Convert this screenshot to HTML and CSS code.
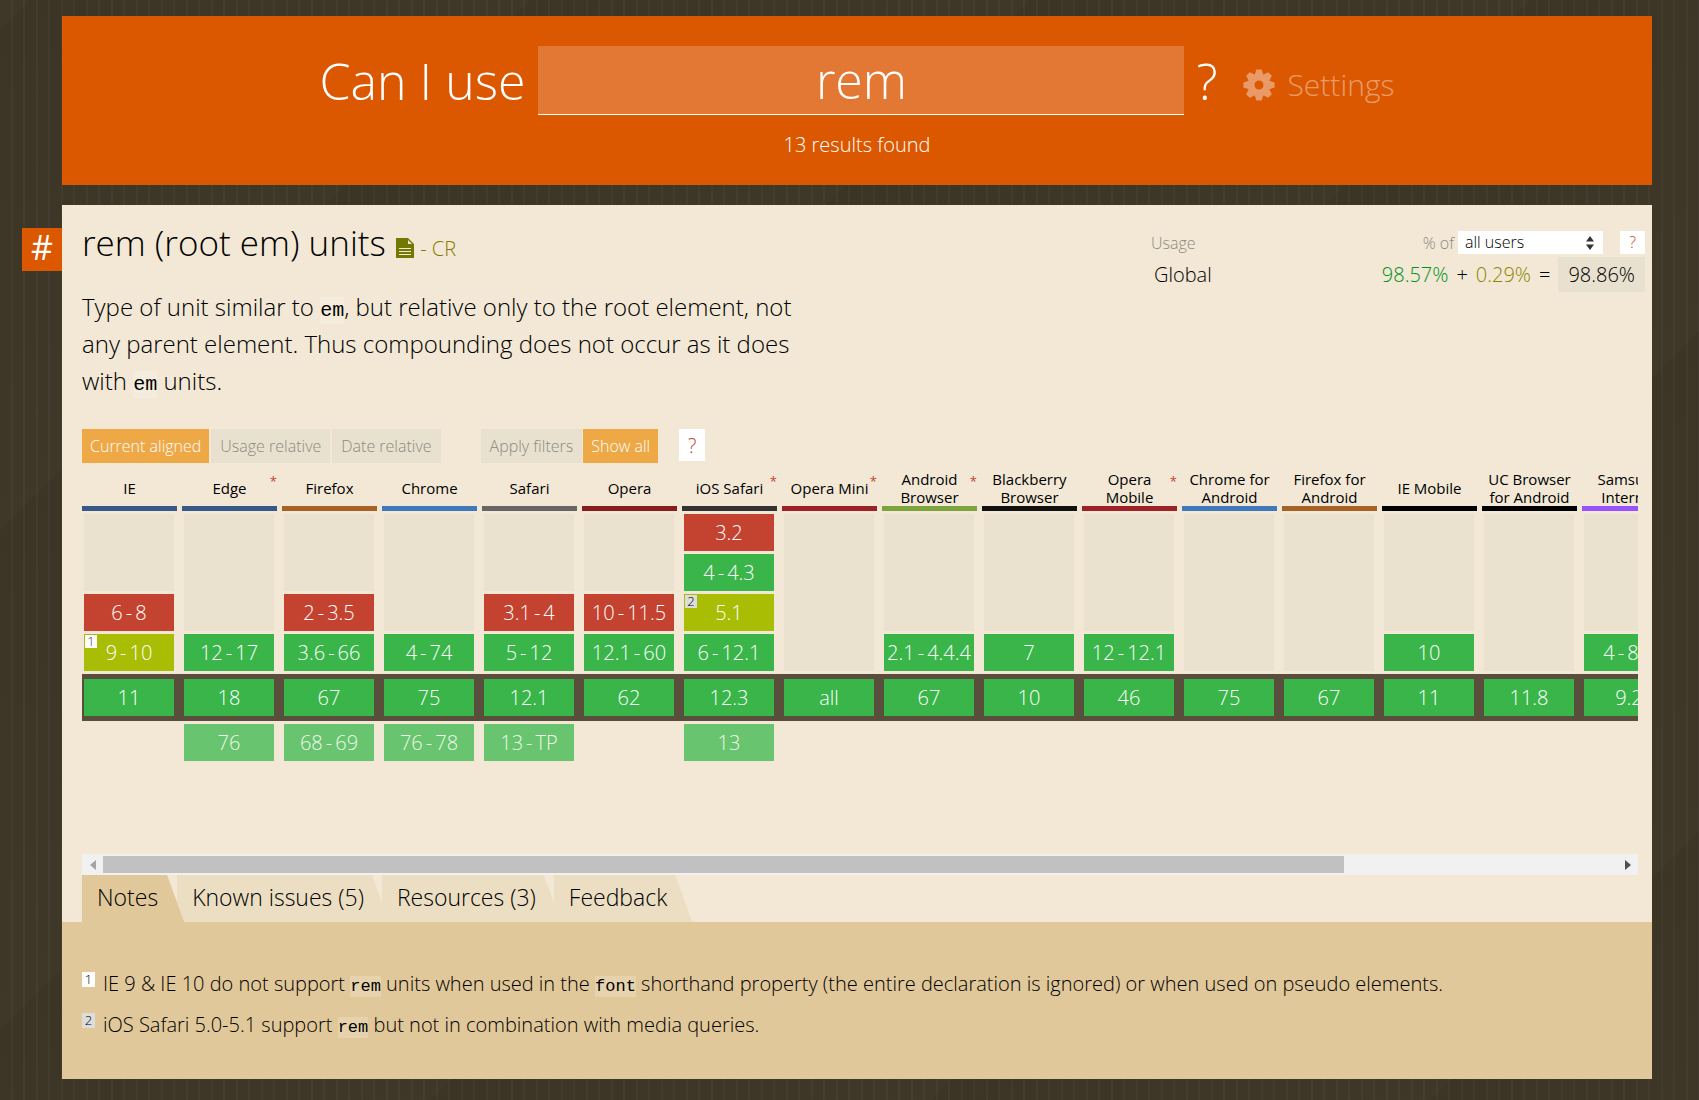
FILE: index.html
```html
<!DOCTYPE html>
<html lang="en">
<head>
<meta charset="utf-8">
<title>Can I use... rem</title>
<link rel="stylesheet" href="styles.css">
</head>
<body>
<header class="search">
  <form class="search-form">
    <label class="search-label" for="q">Can I use</label>
    <input class="search-input" id="q" type="text" value="rem">
    <span class="search-label search-mark">?</span>
    <button class="settings" type="button">
      <svg class="gear" viewBox="-16 -16 32 32" aria-hidden="true">
        <circle r="7.800" fill="none" stroke="currentColor" stroke-width="6.600"/>
        <g fill="currentColor">
          <path id="tooth" d="M-4.600-9.500L-2.600-15.600H2.600L4.600-9.500Z"/>
          <use href="#tooth" transform="rotate(45)"/>
          <use href="#tooth" transform="rotate(90)"/>
          <use href="#tooth" transform="rotate(135)"/>
          <use href="#tooth" transform="rotate(180)"/>
          <use href="#tooth" transform="rotate(225)"/>
          <use href="#tooth" transform="rotate(270)"/>
          <use href="#tooth" transform="rotate(315)"/>
        </g>
      </svg>
      Settings
    </button>
  </form>
  <p class="results">13 results found</p>
</header>

<main class="feature">
  <a class="permalink" href="#rem">#</a>
  <div class="feature-top">
    <div class="feature-info">
      <h1 class="title">rem (root em) units
        <a class="spec" href="#spec">
          <svg class="doc" viewBox="0 0 18 20" aria-hidden="true"><path fill="currentColor" d="M0 0H12L18 6V20H0Z"/><path fill="#f2e8d5" d="M12 2V6H16ZM3 10H15V11H3ZM3 13H15V14H3ZM3 16H15V17H3Z"/></svg>
          - CR</a>
      </h1>
      <p class="description">Type of unit similar to <code>em</code>, but relative only to the root element, not any parent element. Thus compounding does not occur as it does with <code>em</code> units.</p>
    </div>
    <div class="usage">
      <div class="usage-head">
        <span class="usage-name">Usage</span>
        <label for="users">% of</label>
        <span class="select-wrap">
          <select class="users" id="users"><option>all users</option></select>
          <svg class="select-arrows" viewBox="0 0 8 14" aria-hidden="true"><path d="M0 5.500L4 0 8 5.500ZM0 8.500L4 14 8 8.500Z"/></svg>
        </span>
        <button class="help help-small" type="button">?</button>
      </div>
      <div class="usage-row">
        <span class="usage-name">Global</span>
        <span class="full">98.57%</span><span>+</span><span class="partial">0.29%</span><span>=</span><span class="total">98.86%</span>
      </div>
    </div>
  </div>

  <div class="toolbar">
    <div class="group modes">
      <button class="opt on" type="button">Current aligned</button>
      <button class="opt" type="button">Usage relative</button>
      <button class="opt" type="button">Date relative</button>
    </div>
    <div class="group">
      <button class="opt" type="button">Apply filters</button>
      <button class="opt on" type="button">Show all</button>
    </div>
    <button class="help" type="button">?</button>
  </div>

  <div class="scroller">
    <table class="support">
      <thead>
        <tr>
          <th><div class="browser ie">IE</div></th>
          <th><div class="browser ie">Edge<sup>*</sup></div></th>
          <th><div class="browser firefox">Firefox</div></th>
          <th><div class="browser chrome">Chrome</div></th>
          <th><div class="browser safari">Safari</div></th>
          <th><div class="browser opera">Opera</div></th>
          <th><div class="browser ios">iOS Safari<sup>*</sup></div></th>
          <th><div class="browser opera-m">Opera Mini<sup>*</sup></div></th>
          <th><div class="browser android">Android<br>Browser<sup>*</sup></div></th>
          <th><div class="browser bb">Blackberry<br>Browser</div></th>
          <th><div class="browser opera-m">Opera<br>Mobile<sup>*</sup></div></th>
          <th><div class="browser chrome">Chrome for<br>Android</div></th>
          <th><div class="browser firefox">Firefox for<br>Android</div></th>
          <th><div class="browser black">IE Mobile</div></th>
          <th><div class="browser black">UC Browser<br>for Android</div></th>
          <th><div class="browser samsung">Samsung<br>Internet</div></th>
        </tr>
      </thead>
      <tbody>
        <tr>
          <td class="none" rowspan="2"></td>
          <td class="none" rowspan="3"></td>
          <td class="none" rowspan="2"></td>
          <td class="none" rowspan="3"></td>
          <td class="none" rowspan="2"></td>
          <td class="none" rowspan="2"></td>
          <td class="no">3.2</td>
          <td class="none" rowspan="4"></td>
          <td class="none" rowspan="3"></td>
          <td class="none" rowspan="3"></td>
          <td class="none" rowspan="3"></td>
          <td class="none" rowspan="4"></td>
          <td class="none" rowspan="4"></td>
          <td class="none" rowspan="3"></td>
          <td class="none" rowspan="4"></td>
          <td class="none" rowspan="3"></td>
        </tr>
        <tr>
          <td class="yes">4<i>-</i>4.3</td>
        </tr>
        <tr>
          <td class="no">6<i>-</i>8</td>
          <td class="no">2<i>-</i>3.5</td>
          <td class="no">3.1<i>-</i>4</td>
          <td class="no">10<i>-</i>11.5</td>
          <td class="part"><span class="ref ref-2">2</span>5.1</td>
        </tr>
        <tr>
          <td class="part"><span class="ref">1</span>9<i>-</i>10</td>
          <td class="yes">12<i>-</i>17</td>
          <td class="yes">3.6<i>-</i>66</td>
          <td class="yes">4<i>-</i>74</td>
          <td class="yes">5<i>-</i>12</td>
          <td class="yes">12.1<i>-</i>60</td>
          <td class="yes">6<i>-</i>12.1</td>
          <td class="yes">2.1<i>-</i>4.4.4</td>
          <td class="yes">7</td>
          <td class="yes">12<i>-</i>12.1</td>
          <td class="yes">10</td>
          <td class="yes">4<i>-</i>8.2</td>
        </tr>
        <tr class="current">
          <td class="yes">11</td>
          <td class="yes">18</td>
          <td class="yes">67</td>
          <td class="yes">75</td>
          <td class="yes">12.1</td>
          <td class="yes">62</td>
          <td class="yes">12.3</td>
          <td class="yes">all</td>
          <td class="yes">67</td>
          <td class="yes">10</td>
          <td class="yes">46</td>
          <td class="yes">75</td>
          <td class="yes">67</td>
          <td class="yes">11</td>
          <td class="yes">11.8</td>
          <td class="yes">9.2</td>
        </tr>
        <tr class="future">
          <td></td>
          <td class="soon">76</td>
          <td class="soon">68<i>-</i>69</td>
          <td class="soon">76<i>-</i>78</td>
          <td class="soon">13<i>-</i>TP</td>
          <td></td>
          <td class="soon">13</td>
          <td colspan="9"></td>
        </tr>
      </tbody>
    </table>
  </div>
  <div class="scrollbar">
    <button class="arrow" type="button" aria-label="Scroll left" disabled><svg viewBox="0 0 6 10"><path d="M6 0V10L0 5Z"/></svg></button>
    <div class="track"><div class="thumb"></div></div>
    <button class="arrow" type="button" aria-label="Scroll right"><svg viewBox="0 0 6 10"><path d="M0 0V10L6 5Z"/></svg></button>
  </div>

  <nav class="tabs">
    <button class="tab active" type="button">Notes</button>
    <button class="tab" type="button">Known issues (5)</button>
    <button class="tab" type="button">Resources (3)</button>
    <button class="tab" type="button">Feedback</button>
  </nav>
  <section class="notes">
    <div class="note"><span class="mark">1</span><p>IE 9 &amp; IE 10 do not support <code>rem</code> units when used in the <code>font</code> shorthand property (the entire declaration is ignored) or when used on pseudo elements.</p></div>
    <div class="note"><span class="mark mark-2">2</span><p>iOS Safari 5.0-5.1 support <code>rem</code> but not in combination with media queries.</p></div>
  </section>
</main>
</body>
</html>
```
FILE: styles.css
```css
* { box-sizing: border-box; }

body {
  margin: 0;
  padding: 16px 47px 21px 62px;
  font-family: "Open Sans", "Noto Sans", sans-serif;
  font-weight: 300;
  font-size: 20px;
  color: #000;
  background-color: #3d3527;
  background-image:
    repeating-linear-gradient(90deg, transparent 0 11px, rgba(255, 255, 255, .03) 11px 13px, transparent 13px 23px, rgba(255, 255, 255, .03) 23px 25px),
    linear-gradient(135deg, #3c3526 0%, #3f3829 50%, #3c3526 50%, #3f3829 100%);
  background-size: auto, 500px 500px;
  background-position: 0 0, 30px 0;
}

h1, p { margin: 0; font-weight: 300; }
button, input, select { font: inherit; color: inherit; border: 0; padding: 0; border-radius: 0; }
a { text-decoration: none; }

.search {
  padding: 30px 20px 25px;
  margin-bottom: 20px;
  background: #db5700;
  color: #fff;
}
.search-form { display: flex; justify-content: center; align-items: center; }
.search-label { font-size: 50px; line-height: 68px; white-space: nowrap; }
.search-input {
  flex: 0 1 646px;
  min-width: 0;
  height: 69px;
  margin: 0 12px 0 13px;
  font-size: 50px;
  text-align: center;
  background: rgba(255, 255, 255, .2);
  border-bottom: 1px solid #fff;
}
.settings {
  display: flex;
  align-items: center;
  gap: 12px;
  margin: 8px 0 0 26px;
  font-size: 30px;
  line-height: 40px;
  background: none;
  opacity: .4;
}
.gear { width: 32px; height: 32px; }
.results { margin-top: 15px; line-height: 30px; text-align: center; }

.feature {
  position: relative;
  background: #f2e8d5;
}
.permalink {
  position: absolute;
  top: 23px;
  right: 100%;
  width: 40px;
  height: 43px;
  font-size: 34px;
  font-weight: 400;
  line-height: 38px;
  text-align: center;
  background: #db5700;
  color: #fff;
}
.feature-top {
  display: flex;
  justify-content: space-between;
  padding: 16px 7px 30px 20px;
}
.feature-info { flex: 0 1 720px; }
.title { font-size: 35px; line-height: 44px; }
.spec { font-size: 20px; line-height: 20px; color: #827a00; }
.doc { width: 18px; height: 20px; margin: 0 1px; vertical-align: -2px; color: #737800; }
.description { margin-top: 23px; font-size: 24px; line-height: 37px; }
code {
  font-family: "Liberation Mono", monospace;
  font-weight: 400;
  line-height: 1;
  background: rgba(255, 255, 255, .2);
}
.description code { font-size: 20px; padding: 2px 0; }

.usage { flex: 0 0 494px; padding-top: 10px; }
.usage-head { display: flex; align-items: center; height: 23px; font-size: 16px; color: #8c8a82; }
.usage-name { margin-right: auto; }
.select-wrap { position: relative; margin: 0 17px 0 4px; }
.users {
  display: block;
  appearance: none;
  width: 145px;
  height: 23px;
  padding-left: 7px;
  line-height: 23px;
  color: #000;
  background: #fff;
}
.select-arrows { position: absolute; top: 5px; right: 9px; width: 8px; height: 14px; fill: #333; }
.help { width: 26px; height: 32px; background: #fff; color: #c44230; }
.help-small { width: 25px; height: 23px; font-size: 16px; line-height: 23px; }
.usage-row { display: flex; align-items: center; gap: 8px; height: 35px; margin-top: 3px; padding-left: 3px; }
.full { color: #00911b; }
.partial { color: #8c8500; }
.total { padding: 0 10px; line-height: 35px; background: #e9e1cf; }

.toolbar { display: flex; gap: 21px; padding: 0 20px; }
.group { display: flex; gap: 1px; }
.modes { gap: 2px; margin-right: 19px; }
.opt { height: 34px; padding: 0 9px; font-size: 16px; white-space: nowrap; background: #e9e1cf; color: #8c8a82; }
.opt.on { padding: 0 8px; background: #eea846; color: #fff; }

.scroller { margin: 7px 14px 0 20px; padding-bottom: 93px; overflow: hidden; }
.support { width: 1600px; table-layout: fixed; border-collapse: separate; border-spacing: 0; }
.support th { padding: 0 5px 3px 0; font-weight: 400; font-size: 15px; line-height: 18px; }
.browser {
  position: relative;
  display: flex;
  align-items: center;
  justify-content: center;
  height: 41px;
  border-bottom: 5px solid;
  text-align: center;
}
.browser sup { position: absolute; top: 2px; right: 0; line-height: 18px; font-size: 13px; color: #c44230; }
.ie { border-color: #37598a; }
.firefox { border-color: #a66224; }
.chrome { border-color: #4078bc; }
.safari { border-color: #666; }
.opera { border-color: #861d1e; }
.ios { border-color: #333; }
.opera-m { border-color: #9b2226; }
.android { border-color: #7da33c; }
.bb { border-color: #111; }
.black { border-color: #000; }
.samsung { border-color: #9752ff; }

.support td {
  position: relative;
  height: 40px;
  padding: 0;
  border: 0 solid transparent;
  border-width: 0 8px 3px 2px;
  background-clip: padding-box;
  font-size: 20px;
  line-height: 37px;
  text-align: center;
  white-space: nowrap;
  color: #fff;
}
.support i { margin: 0 3px; font-style: normal; }
.support .none { background-color: #eae1cf; }
.support .no { background-color: #c44230; }
.support .yes { background-color: #39b54a; }
.support .part { background-color: #a8bd04; }
.support .soon { background-color: #68c46f; color: #eef7e8; }
.current { background: #594d3b; }
.support .current td { height: 47px; border-top-width: 5px; border-bottom-width: 5px; }
.support .future td { border-top-width: 3px; border-bottom-width: 0; }
.ref {
  position: absolute;
  top: 1px;
  left: 1px;
  width: 12px;
  height: 13px;
  font-size: 13px;
  line-height: 12px;
  background: #fff;
  color: #444;
}
.ref-2 { background: #ddd; color: #000; }

.scrollbar { display: flex; height: 21px; margin: 0 14px 0 20px; background: #f1f1f1; }
.arrow { display: grid; place-items: center; width: 21px; background: none; fill: #505050; }
.arrow:disabled { fill: #a3a3a3; }
.arrow svg { width: 6px; height: 10px; }
.track { flex: 1; padding: 2px 0; }
.thumb { width: 82%; height: 17px; background: #c1c1c1; }

.tabs { display: flex; padding-left: 20px; }
.tab {
  height: 47px;
  margin-left: -7px;
  padding: 0 25px 2px 15px;
  font-size: 23px;
  line-height: 45px;
  background: #ebdec3;
  clip-path: polygon(0 0, calc(100% - 17px) 0, 100% 100%, 0 100%);
}
.tab.active { position: relative; z-index: 1; margin-left: 0; padding-right: 26px; background: #e0c89a; }
.notes { padding: 41px 20px 34px; background: #e0c89a; }
.note { display: flex; gap: 8px; line-height: 41px; }
.note code { font-size: 17px; padding: 1px 0; }
.mark { width: 13px; height: 15px; margin-top: 9px; font-size: 13px; line-height: 15px; text-align: center; background: #fff; }
.mark-2 { background: #ddd; }
```
